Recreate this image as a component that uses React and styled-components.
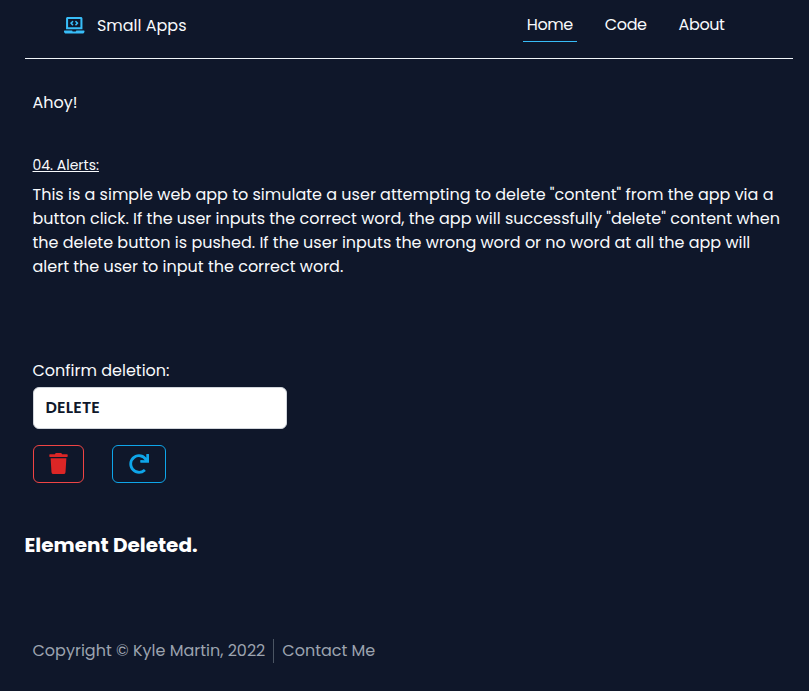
import React, { useState } from "react";
import styled, { createGlobalStyle } from "styled-components";
import { FaLaptopCode, FaTrash, FaRedo } from "react-icons/fa";

const GlobalStyle = createGlobalStyle`
  *, *::before, *::after { box-sizing: border-box; }
  body {
    margin: 0;
    background: #0f172a;
    color: #f8fafc;
    font: 400 16px/24px Poppins, Inter, sans-serif;
  }
  p, h1, h2, h3 { margin: 0; }
`;

const Page = styled.div`
  width: 768px;
  min-height: 691px;
  margin-left: 24.5px;
  display: flex;
  flex-direction: column;
`;

const Header = styled.header`
  display: flex;
  justify-content: space-between;
  align-items: flex-start;
  height: 59px;
  padding: 14px 64px 0 39.5px;
  border-bottom: 1px solid #f1f5f9;
`;

const Brand = styled.div`
  display: flex;
  align-items: center;
  gap: 12.4px;

  svg {
    margin-top: -2px;
    color: #38bdf8;
  }
`;

const Nav = styled.nav`
  display: flex;
  gap: 24px;
  margin-top: -1px;
`;

const NavLink = styled.a`
  height: 29px;
  padding: 0 4px;
  letter-spacing: -0.4px;
  white-space: nowrap;
  border-bottom: 1px solid ${(p) => (p.$active ? "#38bdf8" : "transparent")};
`;

const Intro = styled.section`
  padding: 32px 8px 0;
`;

const Greeting = styled.p`
  line-height: 24px;
`;

const SectionTitle = styled.h2`
  margin-top: 40px;
  font-size: 14px;
  font-weight: 400;
  line-height: 20px;
  text-decoration: underline;
`;

const Description = styled.p`
  margin-top: 8px;
`;

const Form = styled.form`
  display: flex;
  flex-direction: column;
  align-items: flex-start;
  padding: 80px 8px 0;
`;

const Label = styled.label`
  line-height: 24px;
`;

const WordInput = styled.input`
  width: 254px;
  height: 42px;
  margin-top: 4px;
  padding: 0 12px 1px;
  border: 1px solid #d1d5db;
  border-radius: 6px;
  background: #fff;
  color: #0f172a;
  font: inherit;
  font-weight: 600;
  letter-spacing: 0.15px;
  outline: none;
`;

const Actions = styled.div`
  display: flex;
  gap: 28px;
  margin-top: 16px;
`;

const ActionButton = styled.button`
  display: flex;
  align-items: center;
  justify-content: center;
  width: ${(p) => p.$width}px;
  height: 38px;
  padding: 0 0 1px;
  border: 1px solid ${(p) => p.$border};
  border-radius: 6px;
  background: transparent;
  color: ${(p) => p.$color};
`;

const Status = styled.h3`
  margin-top: 48px;
  font-size: 20px;
  font-weight: 700;
  line-height: 28px;
  color: #fff;
`;

const Footer = styled.footer`
  display: flex;
  margin-top: 80px;
  padding-left: 8px;
  color: #9ca3af;
`;

const Copyright = styled.span`
  padding-right: 8px;
  white-space: nowrap;
`;

const Contact = styled.a`
  padding-left: 8px;
  border-left: 1px solid #4b5563;
`;

const links = ["Home", "Code", "About"];

export default function App() {
  const [word, setWord] = useState("DELETE");

  return (
    <>
      <GlobalStyle />
      <Page>
        <Header>
          <Brand>
            <FaLaptopCode size={20.5} />
            Small Apps
          </Brand>
          <Nav>
            {links.map((label) => (
              <NavLink key={label} $active={label === "Home"}>
                {label}
              </NavLink>
            ))}
          </Nav>
        </Header>
        <Intro>
          <Greeting>Ahoy!</Greeting>
          <SectionTitle>04. Alerts:</SectionTitle>
          <Description>
            This is a simple web app to simulate a user attempting to delete "content" from the app
            via a button click. If the user inputs the correct word, the app will successfully
            "delete" content when the delete button is pushed. If the user inputs the wrong word or
            no word at all the app will alert the user to input the correct word.
          </Description>
        </Intro>
        <Form onSubmit={(e) => e.preventDefault()}>
          <Label htmlFor="word">Confirm deletion:</Label>
          <WordInput id="word" value={word} onChange={(e) => setWord(e.target.value)} />
          <Actions>
            <ActionButton type="button" aria-label="Delete" $width={51} $border="#ef4444" $color="#dc2626">
              <FaTrash size={21} />
            </ActionButton>
            <ActionButton type="button" aria-label="Reset" $width={54} $border="#0ea5e9" $color="#0ea5e9">
              <FaRedo size={20} />
            </ActionButton>
          </Actions>
        </Form>
        <Status>Element Deleted.</Status>
        <Footer>
          <Copyright>Copyright © Kyle Martin, 2022</Copyright>
          <Contact>Contact Me</Contact>
        </Footer>
      </Page>
    </>
  );
}
